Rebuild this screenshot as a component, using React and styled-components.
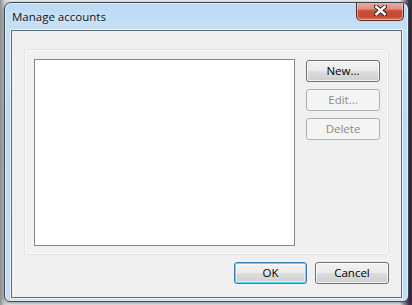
import React from "react";
import styled, { createGlobalStyle } from "styled-components";

const GlobalStyle = createGlobalStyle`
  html, body {
    margin: 0;
    padding: 0;
    background: #f4f4f4;
  }
  body {
    font-family: "Open Sans", "Noto Sans", sans-serif;
  }
`;

const Page = styled.div`
  width: 412px;
  height: 305px;
  box-sizing: border-box;
  padding: 2px 3px 3px 4px;
  background: linear-gradient(90deg, #8c8c8c 0px, #cfcfcf 4px, #f2f2f2 10px, #f2f2f2 400px, #3a2f45 409px);
`;

const Window = styled.div`
  width: 405px;
  height: 300px;
  box-sizing: border-box;
  border: 1px solid #3c4754;
  border-radius: 7px 7px 6px 6px;
  background: linear-gradient(180deg, #bcdaf3 0px, #c6e0f6 28px, #bcd9f3 120px, #c2ddf5 300px);
  box-shadow: inset 0 0 0 1px rgba(255, 255, 255, 0.55), 0 1px 4px rgba(0, 0, 0, 0.45);
  display: flex;
  flex-direction: column;
  overflow: hidden;
`;

const TitleBar = styled.div`
  height: 27px;
  display: flex;
  align-items: flex-start;
  padding-left: 7px;
  flex-shrink: 0;
`;

const Title = styled.span`
  font-size: 11.5px;
  color: #111;
  margin-top: 6px;
  text-shadow: 0 0 6px rgba(255, 255, 255, 0.9);
`;

const CloseButton = styled.div`
  margin-left: auto;
  margin-right: 4px;
  margin-top: -2px;
  width: 48px;
  height: 20px;
  box-sizing: border-box;
  border: 1px solid #5c2a24;
  border-top: none;
  border-radius: 0 0 5px 5px;
  background: linear-gradient(180deg, #eab4a8 0%, #de9382 40%, #c94e37 52%, #c44a32 80%, #d97358 100%);
  box-shadow: inset 0 0 0 1px rgba(255, 220, 210, 0.55);
  display: flex;
  align-items: center;
  justify-content: center;
`;

const Client = styled.div`
  flex: 1;
  margin: 0 6px 3px 6px;
  border: 1px solid #5d6c7c;
  box-shadow: 0 0 0 1px rgba(255, 255, 255, 0.7);
  background: #f0f0f0;
  padding: 18px 12px 13px 12px;
  display: flex;
  flex-direction: column;
  gap: 7px;
`;

const Panel = styled.div`
  height: 206px;
  box-sizing: border-box;
  border: 1px solid #dde3e9;
  border-radius: 3px;
  box-shadow: inset 0 0 0 1px #fbfbfb;
  padding: 9px 8px 8px 9px;
  display: flex;
  gap: 11px;
`;

const ListBox = styled.div`
  width: 262px;
  box-sizing: border-box;
  border: 1px solid #828790;
  background: #fff;
`;

const SideButtons = styled.div`
  display: flex;
  flex-direction: column;
  gap: 7px;
  padding-top: 1px;
`;

const Button = styled.button`
  width: ${(props) => props.width || 74}px;
  height: 22px;
  box-sizing: border-box;
  padding: 0;
  font-family: "Open Sans", "Noto Sans", sans-serif;
  font-size: 11.5px;
  border-radius: 3px;
  border: 1px solid ${(props) => (props.disabled ? "#adb2b5" : props.primary ? "#3c7fb1" : "#707070")};
  color: ${(props) => (props.disabled ? "#8a8a8a" : "#000")};
  background: ${(props) =>
    props.disabled
      ? "#f4f4f4"
      : "linear-gradient(180deg, #f2f2f2 0%, #ebebeb 50%, #dddddd 51%, #cfcfcf 100%)"};
  box-shadow: ${(props) =>
    props.disabled
      ? "none"
      : props.primary
      ? "inset 0 0 0 1px #5fd1f5, inset 0 0 0 2px rgba(255,255,255,0.5)"
      : "inset 0 0 0 1px rgba(255,255,255,0.75)"};
  line-height: 20px;
`;

const Footer = styled.div`
  display: flex;
  justify-content: flex-end;
  gap: 8px;
`;

const CloseIcon = () => (
  <svg width="13" height="11" viewBox="0 0 13 11">
    <path d="M2 1.5 L11 9.5 M11 1.5 L2 9.5" stroke="#3a2420" strokeWidth="4.4" strokeLinecap="square" />
    <path d="M2.3 1.8 L10.7 9.2 M10.7 1.8 L2.3 9.2" stroke="#ffffff" strokeWidth="2.4" strokeLinecap="square" />
  </svg>
);

export default function App() {
  return (
    <>
      <GlobalStyle />
      <Page>
        <Window>
          <TitleBar>
            <Title>Manage accounts</Title>
            <CloseButton>
              <CloseIcon />
            </CloseButton>
          </TitleBar>
          <Client>
            <Panel>
              <ListBox />
              <SideButtons>
                <Button>New...</Button>
                <Button disabled>Edit...</Button>
                <Button disabled>Delete</Button>
              </SideButtons>
            </Panel>
            <Footer>
              <Button primary width={73}>OK</Button>
              <Button>Cancel</Button>
            </Footer>
          </Client>
        </Window>
      </Page>
    </>
  );
}
